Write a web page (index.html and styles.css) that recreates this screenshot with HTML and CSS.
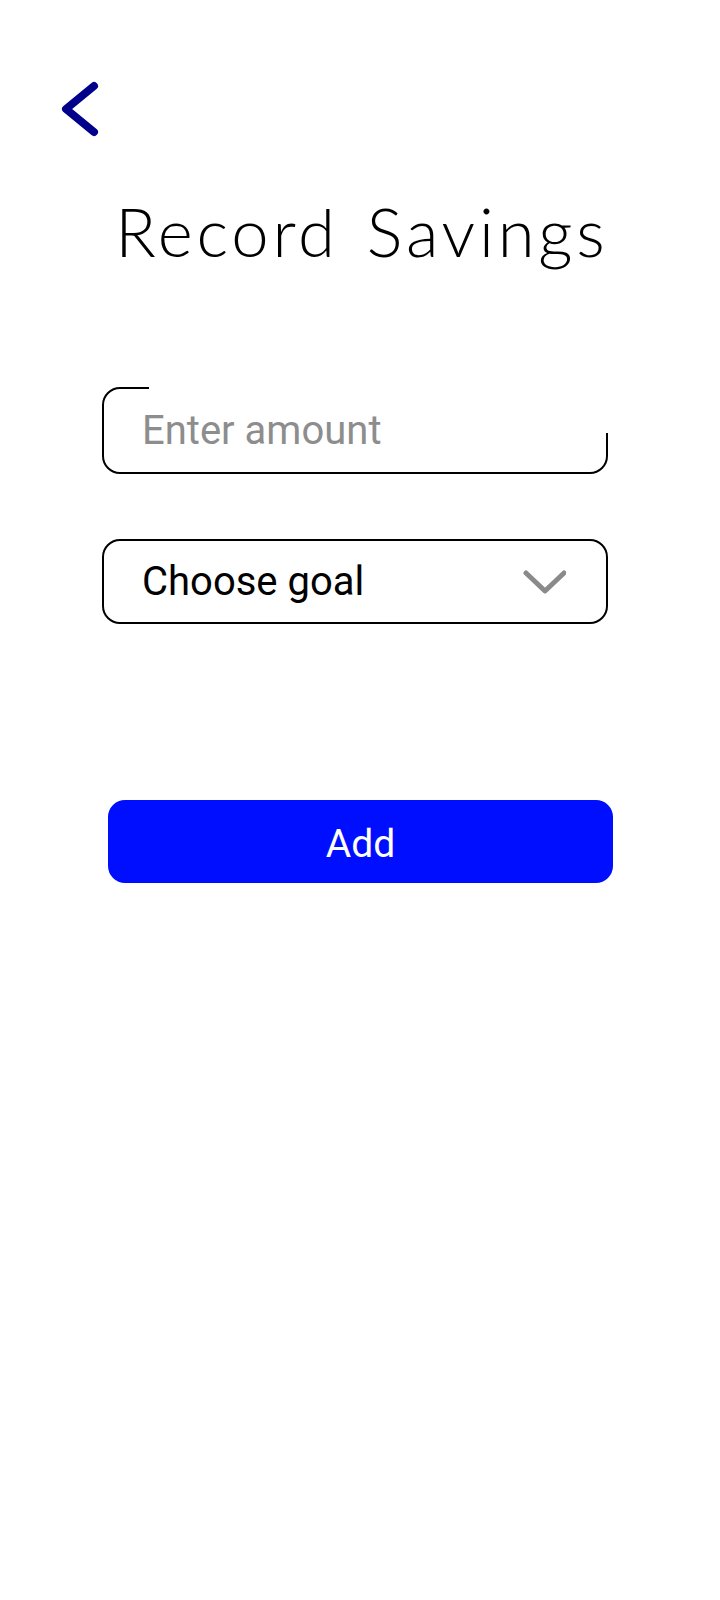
FILE: index.html
```html
<!DOCTYPE html>
<html lang="en">
<head>
<meta charset="utf-8">
<title>Record Savings</title>
<link rel="stylesheet" href="styles.css">
</head>
<body>
<div class="screen">
  <header class="topbar">
    <button class="back" type="button" aria-label="Back">
      <svg width="48" height="62" viewBox="0 0 48 62"><polyline points="38,8 10,31 38,54" fill="none" stroke="#00008a" stroke-width="8" stroke-linecap="round" stroke-linejoin="round"/></svg>
    </button>
  </header>
  <h1 class="title">Record Savings</h1>
  <form class="form">
    <div class="field field-amount"><span class="placeholder">Enter amount</span></div>
    <div class="field field-select"><span class="value">Choose goal</span>
      <svg class="caret" width="44" height="28" viewBox="0 0 44 28"><polyline points="4,5 23,23 42,5" fill="none" stroke="#8a8a8a" stroke-width="5" stroke-linecap="round" stroke-linejoin="round"/></svg>
    </div>
    <button class="add" type="button">Add</button>
  </form>
</div>
</body>
</html>
```
FILE: styles.css
```css
html, body {
  margin: 0;
  padding: 0;
  background: #ffffff;
}
.screen {
  width: 720px;
  min-height: 1600px;
  padding-top: 78px;
  box-sizing: border-box;
  font-family: Roboto, "Liberation Sans", sans-serif;
}
.topbar {
  display: flex;
  padding-left: 56px;
}
.back {
  display: block;
  padding: 0;
  margin: 0;
  border: 0;
  background: none;
  height: 62px;
}
.back svg { display: block; }
.title {
  margin: 58px 0 0 0;
  font-family: Lato, "Liberation Sans", sans-serif;
  font-weight: 300;
  font-size: 67px;
  line-height: 66px;
  text-align: center;
  color: #000;
  letter-spacing: 3.8px;
  word-spacing: 6px;
  padding-left: 4px;
}
.form {
  display: flex;
  flex-direction: column;
  align-items: flex-start;
  margin-top: 123px;
  padding-left: 102px;
}
.field {
  position: relative;
  width: 506px;
  box-sizing: border-box;
  border: 2px solid #000;
  border-radius: 18px;
  display: flex;
  align-items: center;
  padding-left: 38px;
  font-size: 40px;
  line-height: 47px;
}
.field-amount {
  height: 87px;
}
.field-amount::after {
  content: "";
  position: absolute;
  z-index: 0;
  top: -3px;
  left: 45px;
  right: -3px;
  height: 47px;
  background: #fff;
}
.placeholder {
  position: relative;
  z-index: 1;
  color: #8d8d8d;
}
.field-select {
  height: 85px;
  margin-top: 65px;
  justify-content: space-between;
  padding-right: 40px;
}
.value { color: #000; }
.caret { display: block; }
.add {
  margin-top: 176px;
  margin-left: 6px;
  width: 505px;
  height: 83px;
  border: 0;
  border-radius: 17px;
  background: #000eff;
  color: #fff;
  font-family: Roboto, "Liberation Sans", sans-serif;
  font-size: 39px;
  line-height: 46px;
  padding: 4px 0 0 0;
}
```
